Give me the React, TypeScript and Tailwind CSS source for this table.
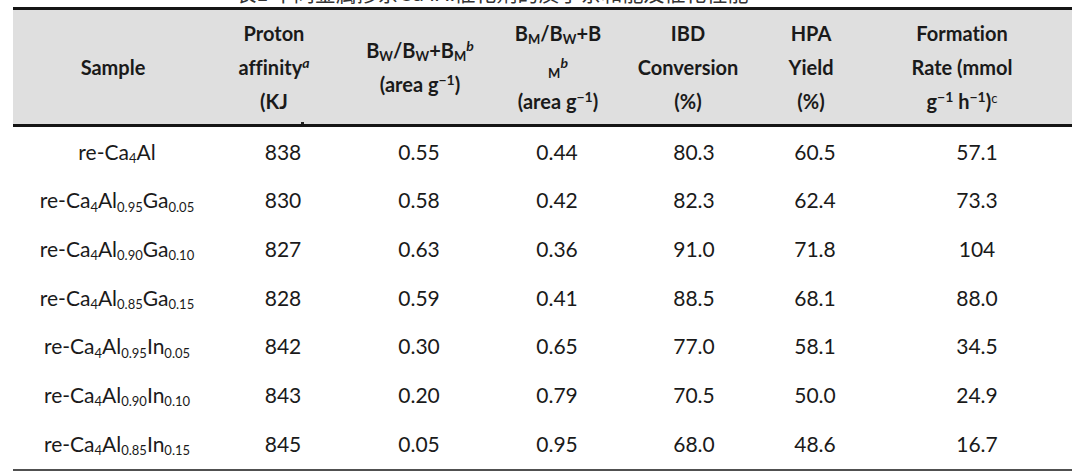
import React from "react";

type Row = { s: React.ReactNode; v: string[] };

const S = ({ a, b, m }: { a?: string; b?: string; m?: string }) => (
  <span>
    re-Ca<sub className="text-[13px]">4</sub>Al
    {a && <sub className="text-[13px]">{a}</sub>}
    {m}
    {b && <sub className="text-[13px]">{b}</sub>}
  </span>
);

const rows: Row[] = [
  { s: <S />, v: ["838", "0.55", "0.44", "80.3", "60.5", "57.1"] },
  { s: <S a="0.95" m="Ga" b="0.05" />, v: ["830", "0.58", "0.42", "82.3", "62.4", "73.3"] },
  { s: <S a="0.90" m="Ga" b="0.10" />, v: ["827", "0.63", "0.36", "91.0", "71.8", "104"] },
  { s: <S a="0.85" m="Ga" b="0.15" />, v: ["828", "0.59", "0.41", "88.5", "68.1", "88.0"] },
  { s: <S a="0.95" m="In" b="0.05" />, v: ["842", "0.30", "0.65", "77.0", "58.1", "34.5"] },
  { s: <S a="0.90" m="In" b="0.10" />, v: ["843", "0.20", "0.79", "70.5", "50.0", "24.9"] },
  { s: <S a="0.85" m="In" b="0.15" />, v: ["845", "0.05", "0.95", "68.0", "48.6", "16.7"] },
];

const bodyPad = ["pl-[4px]", "pl-[10px]", "", "", "", "", "pl-[25px]"];

const sub = "text-[13px]";

export default function App() {
  return (
    <div className="w-[1080px] h-[473px] bg-white overflow-hidden text-[#1a1a1a] [font-variant-ligatures:none] font-['Lato','Noto_Sans_CJK_SC',sans-serif]">
      <div className="h-[7px] overflow-hidden flex justify-center">
        <div className="-mt-[19px] text-[21px] leading-[22px] whitespace-nowrap text-[#333] font-['Noto_Sans_CJK_SC',sans-serif] pr-[96px]">
          表1 不同金属掺杂Ca4Al催化剂的质子亲和能及催化性能
        </div>
      </div>
      <div className="ml-[13px] w-[1059px]">
        <div className="border-t-[3px] border-b-[3px] border-[#151515] bg-[#dfdfdf] h-[120px] grid grid-cols-[204px_122px_160px_116px_158px_84px_215px] font-bold text-[20px] leading-[34px]">
          <div className="flex flex-col items-center justify-center pr-[4px]">Sample</div>
          <div className="relative flex flex-col items-center justify-center pr-[8px]">
            <div>Proton</div>
            <div>
              affinity<sup className="text-[14px] italic font-bold">a</sup>
            </div>
            <div>(KJ</div>
            <span className="absolute left-[84px] bottom-[0px] w-[3px] h-[2px] bg-[#222]" />
          </div>
          <div className="flex flex-col items-center justify-center pl-[2px]">
            <div>
              B<sub className={sub}>W</sub>/B<sub className={sub}>W</sub>+B<sub className={sub}>M</sub>
              <sup className="text-[14px] italic">b</sup>
            </div>
            <div>
              (area g<sup className="text-[14px]">−1</sup>)
            </div>
          </div>
          <div className="flex flex-col items-center justify-center pl-[2px]">
            <div>
              B<sub className={sub}>M</sub>/B<sub className={sub}>W</sub>+B
            </div>
            <div>
              <sub className={sub}>M</sub>
              <sup className="text-[14px] italic">b</sup>
            </div>
            <div>
              (area g<sup className="text-[14px]">−1</sup>)
            </div>
          </div>
          <div className="flex flex-col items-center justify-center pr-[12px]">
            <div>IBD</div>
            <div>Conversion</div>
            <div>(%)</div>
          </div>
          <div className="flex flex-col items-center justify-center pr-[8px]">
            <div>HPA</div>
            <div>Yield</div>
            <div>(%)</div>
          </div>
          <div className="flex flex-col items-center justify-center pr-[5px]">
            <div>Formation</div>
            <div>Rate (mmol</div>
            <div>
              g<sup className="text-[14px]">−1</sup> h<sup className="text-[14px]">−1</sup>)
              <sup className="text-[13px] font-normal">c</sup>
            </div>
          </div>
        </div>
        <div className="border-b-[2px] border-[#505050] pb-[1px]">
          {rows.map((r, i) => (
            <div
              key={i}
              className="grid grid-cols-[204px_122px_160px_116px_158px_84px_215px] h-[48.7px] items-center text-[21px]"
            >
              <div className={`flex justify-center ${bodyPad[0]}`}>{r.s}</div>
              {r.v.map((v, j) => (
                <div key={j} className={`flex justify-center ${bodyPad[j + 1]}`}>
                  {v}
                </div>
              ))}
            </div>
          ))}
        </div>
      </div>
    </div>
  );
}
